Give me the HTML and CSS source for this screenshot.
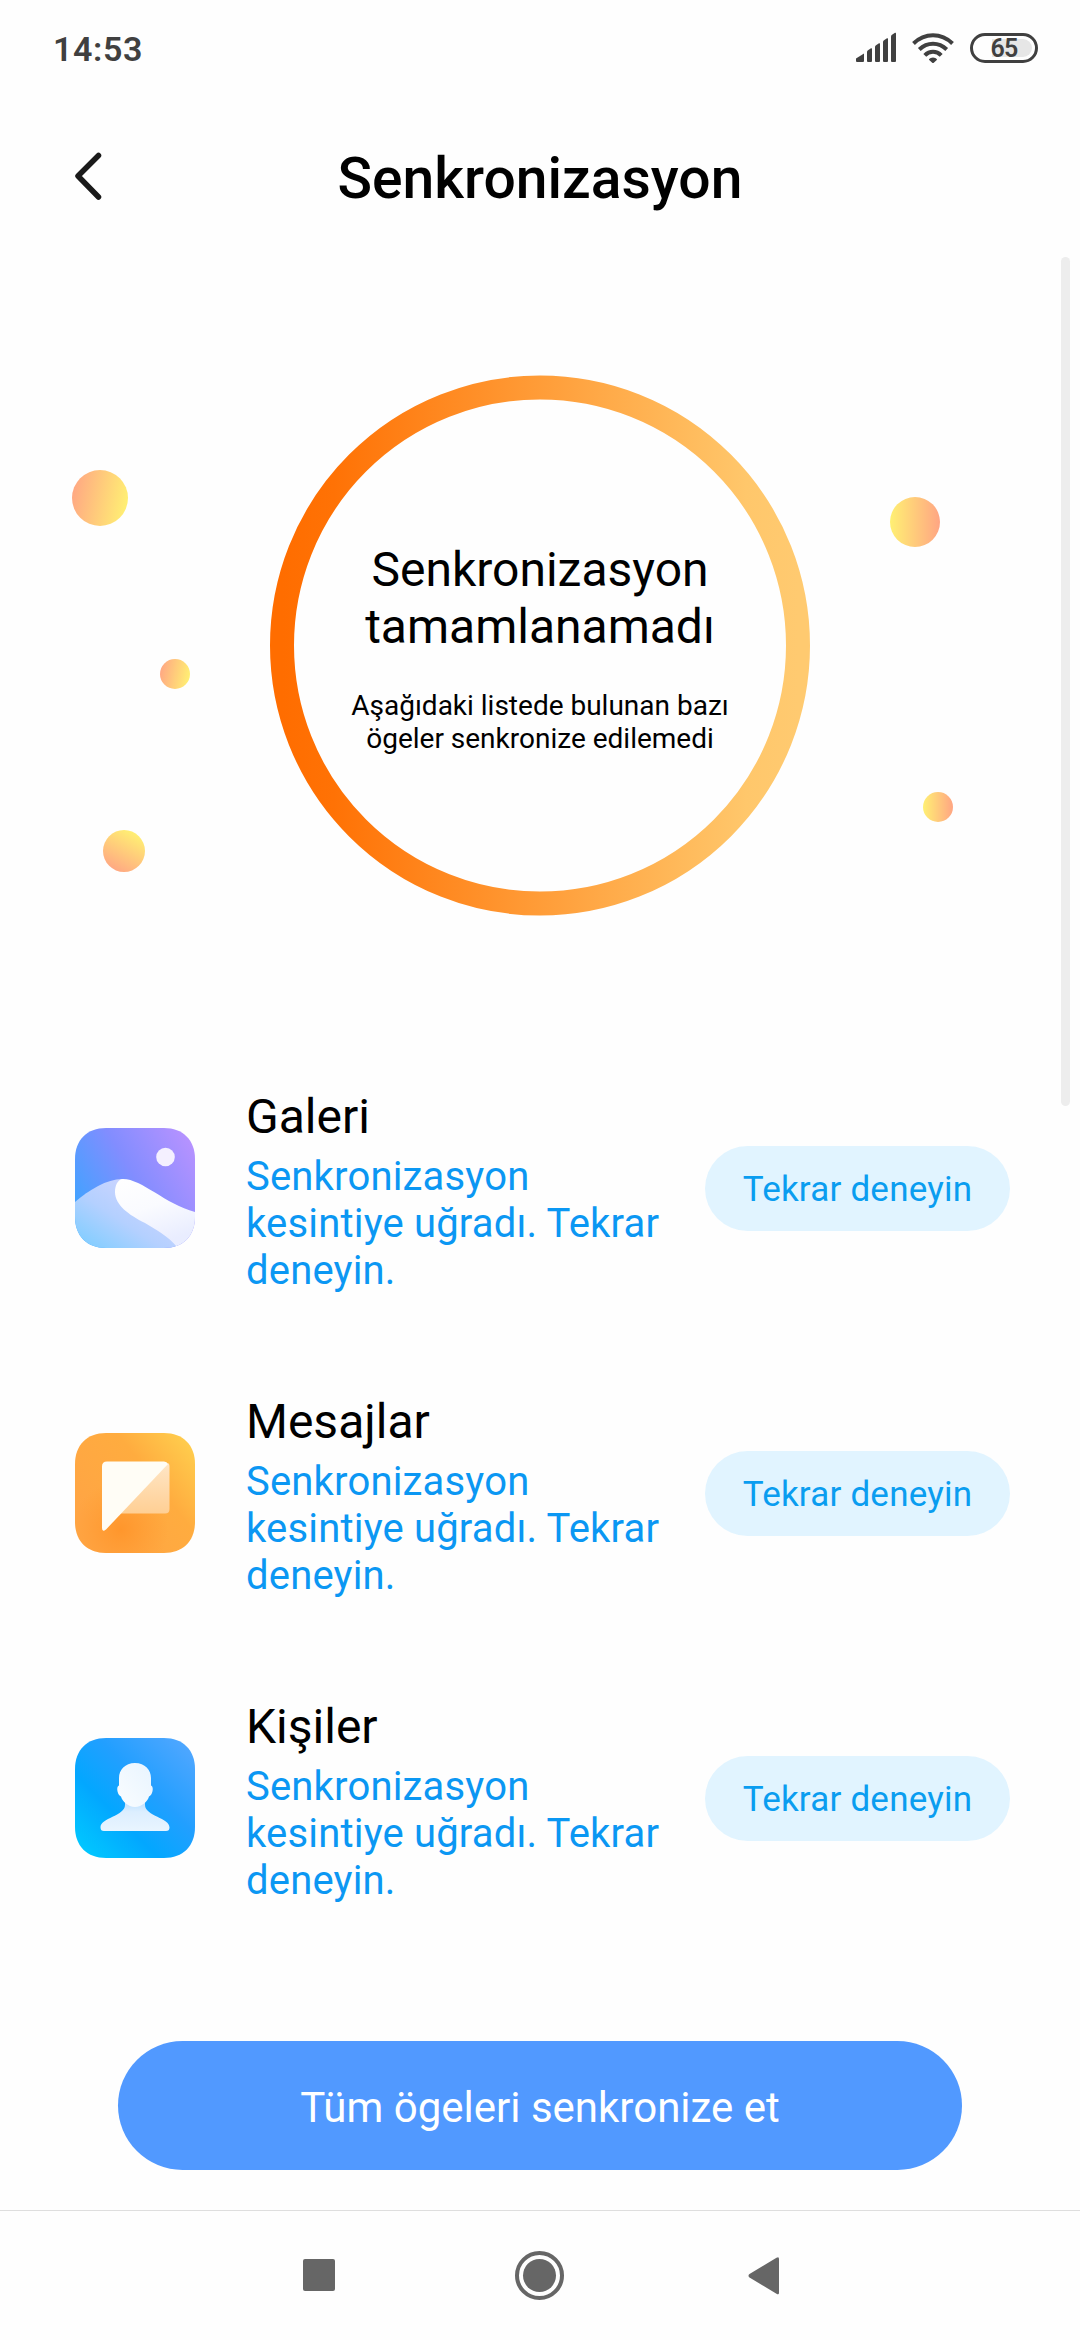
FILE: index.html
```html
<!DOCTYPE html>
<html lang="tr">
<head>
<meta charset="utf-8">
<title>Senkronizasyon</title>
<link rel="stylesheet" href="styles.css">
</head>
<body>
<div class="screen">
  <div class="status">
    <span class="time">14:53</span>
    <svg class="status-icons" width="184" height="32" viewBox="0 0 184 32">
      <g fill="#404040">
        <path d="M2 26.5 10 21.5V29a1 1 0 0 1-1 1H3a1 1 0 0 1-1-1z"/>
        <path d="M13 20q0-1 1-1.700l3-2q1-.5 1 .7V29a1 1 0 0 1-1 1h-3a1 1 0 0 1-1-1z"/>
        <path d="M21 15q0-1 1-1.700l3-2q1-.5 1 .7V29a1 1 0 0 1-1 1h-3a1 1 0 0 1-1-1z"/>
        <path d="M29 10q0-1 1-1.700l3-2q1-.5 1 .7V29a1 1 0 0 1-1 1h-3a1 1 0 0 1-1-1z"/>
        <path d="M37 4.500q0-1 1-1.700l3-2q1-.5 1 .7V29a1 1 0 0 1-1 1h-3a1 1 0 0 1-1-1z"/>
        <path d="M79 25.500q-2.700 0-3.800 1.500-.4.500 0 1l3 2.800q.8.600 1.600 0l3-2.800q.4-.5 0-1-1.100-1.500-3.800-1.500z"/>
      </g>
      <g fill="none" stroke="#404040" stroke-width="4">
        <path d="M59.500 11.500Q68 3.300 79 3.300T98.500 11.500"/>
        <path d="M65.300 17.500Q71.300 11.700 79 11.700T92.700 17.500"/>
        <path d="M70.800 23.300Q74.300 19.700 79 19.700T87.200 23.300"/>
      </g>
      <path d="M138 7h31a9 9 0 0 1 0 18h-31z" fill="#e6e6e6"/>
      <rect x="117.500" y="2.500" width="65" height="27" rx="13.500" fill="none" stroke="#404040" stroke-width="3"/>
      <text class="battery" x="150" y="25" text-anchor="middle">65</text>
    </svg>
  </div>

  <header class="bar">
    <svg class="back" width="30" height="50" viewBox="0 0 30 50"><path d="M24.500 4.500 4 25 24.500 46" fill="none" stroke="#1a1a1a" stroke-width="5.500" stroke-linecap="round" stroke-linejoin="round"/></svg>
    <h1 class="title">Senkronizasyon</h1>
  </header>

  <main class="content">
    <section class="hero">
      <svg class="art" width="1080" height="796" viewBox="0 240 1080 796">
        <defs>
          <linearGradient id="ring" x1="0" x2="1" y1="0" y2="0"><stop offset="0" stop-color="#ff6d00"/><stop offset=".1" stop-color="#ff7205"/><stop offset=".9" stop-color="#ffc76b"/><stop offset="1" stop-color="#ffca70"/></linearGradient>
          <linearGradient id="dotL" x1="0" x2="1" y1=".4" y2=".6"><stop offset="0" stop-color="#ffa883"/><stop offset="1" stop-color="#fff073"/></linearGradient>
          <linearGradient id="dotR" x1="0" x2="1" y1="0" y2="0"><stop offset="0" stop-color="#fff073"/><stop offset="1" stop-color="#ffa583"/></linearGradient>
          <linearGradient id="dotB" x1=".25" x2=".75" y1=".95" y2=".05"><stop offset="0" stop-color="#ffa883"/><stop offset="1" stop-color="#fff073"/></linearGradient>
        </defs>
        <circle cx="540" cy="645.500" r="258" fill="none" stroke="url(#ring)" stroke-width="24"/>
        <circle cx="100" cy="498" r="28" fill="url(#dotL)"/>
        <circle cx="175" cy="674" r="15" fill="url(#dotL)"/>
        <circle cx="124" cy="851" r="21" fill="url(#dotB)"/>
        <circle cx="915" cy="522" r="25" fill="url(#dotR)"/>
        <circle cx="938" cy="807" r="15" fill="url(#dotR)"/>
      </svg>
      <div class="state">
        <h2 class="state-title">Senkronizasyon tamamlanamadı</h2>
        <p class="state-text">Aşağıdaki listede bulunan bazı ögeler senkronize edilemedi</p>
      </div>
    </section>

    <ul class="list">
      <li class="row">
        <svg class="app" width="120" height="120" viewBox="0 0 120 120">
          <defs>
            <linearGradient id="sky" x1="0" y1=".65" x2=".95" y2=".1"><stop offset="0" stop-color="#3fa3ff"/><stop offset=".5" stop-color="#828dff"/><stop offset="1" stop-color="#b592ff"/></linearGradient>
            <linearGradient id="hill" x1="0" y1="1" x2=".7" y2=".3"><stop offset="0" stop-color="#78cdff"/><stop offset=".6" stop-color="#b4d0ff"/><stop offset="1" stop-color="#c8d4ff"/></linearGradient>
            <linearGradient id="dune" x1="0" y1="0" x2=".4" y2="1"><stop offset="0" stop-color="#fff"/><stop offset=".5" stop-color="#fafbff"/><stop offset="1" stop-color="#e9edff"/></linearGradient>
            <clipPath id="tile"><path d="M31 0H89C108 0 120 12 120 31V89C120 108 108 120 89 120H31C12 120 0 108 0 89V31C0 12 12 0 31 0Z"/></clipPath>
          </defs>
          <g clip-path="url(#tile)">
            <rect width="120" height="120" fill="url(#sky)"/>
            <path d="M0 74C14 62 32 51 47 51L80 80 104 120H0Z" fill="url(#hill)"/>
            <path d="M47 51C66 50 90 76 120 84V120H103C92 107 81 102 70 95C54 87 40 77 40 64C40 57 43 52 47 51Z" fill="url(#dune)"/>
            <circle cx="90.500" cy="29" r="9.300" fill="#f4f0ff"/>
          </g>
        </svg>
        <div class="info"><h3 class="name">Galeri</h3><p class="note">Senkronizasyon kesintiye uğradı. Tekrar deneyin.</p></div>
        <button class="retry">Tekrar deneyin</button>
      </li>
      <li class="row">
        <svg class="app" width="120" height="120" viewBox="0 0 120 120">
          <defs>
            <linearGradient id="amber" x1=".1" y1=".7" x2="1" y2="0"><stop offset="0" stop-color="#ffa544"/><stop offset=".55" stop-color="#ffac3f"/><stop offset="1" stop-color="#ffd350"/></linearGradient>
            <radialGradient id="glow" cx=".38" cy=".8" r=".4"><stop offset="0" stop-color="#ff962c"/><stop offset="1" stop-color="#ff9a30" stop-opacity="0"/></radialGradient>
            <linearGradient id="fold" x1="0" y1="1" x2="0" y2="0"><stop offset="0" stop-color="#ffcf94"/><stop offset="1" stop-color="#ffe6c6"/></linearGradient>
          </defs>
          <g clip-path="url(#tile)">
            <rect width="120" height="120" fill="url(#amber)"/>
            <rect width="120" height="120" fill="url(#glow)"/>
            <path d="M93 30 45 80.500H90Q94.500 80.500 94.500 76V33Q94.500 31 93 30Z" fill="url(#fold)"/>
            <path d="M32 28.500H89Q92 28.500 93 31L31 96.500Q27 99.500 27 95V33.500Q27 28.500 32 28.500Z" fill="#fffdf6"/>
          </g>
        </svg>
        <div class="info"><h3 class="name">Mesajlar</h3><p class="note">Senkronizasyon kesintiye uğradı. Tekrar deneyin.</p></div>
        <button class="retry">Tekrar deneyin</button>
      </li>
      <li class="row">
        <svg class="app" width="120" height="120" viewBox="0 0 120 120">
          <defs>
            <linearGradient id="azure" x1="0" y1="1" x2="1" y2="0"><stop offset="0" stop-color="#00ceff"/><stop offset=".35" stop-color="#03a7ff"/><stop offset=".6" stop-color="#229fff"/><stop offset="1" stop-color="#57a8ff"/></linearGradient>
            <linearGradient id="bust" x1="0" y1="0" x2="0" y2="1"><stop offset="0" stop-color="#a9d8ff"/><stop offset=".45" stop-color="#dceeff"/><stop offset="1" stop-color="#e9f5ff"/></linearGradient>
            <linearGradient id="head" x1="1" y1="0" x2="0" y2="1"><stop offset="0" stop-color="#e8f4ff"/><stop offset="1" stop-color="#fafdff"/></linearGradient>
          </defs>
          <g clip-path="url(#tile)">
            <rect width="120" height="120" fill="url(#azure)"/>
            <path d="M50 58V67C50 78 25 80 25.500 89.500Q25.500 93 29 93H91Q94.500 93 94.500 89.500C95 80 70 78 70 67V58Z" fill="url(#bust)"/>
            <path d="M60 25C70 25 76 32 76 40V47.500C79 48 78 57 74 58.500C73 63 67 69 60 69S47 63 46 58.500C42 57 41 48 44 47.500V40C44 32 50 25 60 25Z" fill="url(#head)"/>
          </g>
        </svg>
        <div class="info"><h3 class="name">Kişiler</h3><p class="note">Senkronizasyon kesintiye uğradı. Tekrar deneyin.</p></div>
        <button class="retry">Tekrar deneyin</button>
      </li>
    </ul>
    <div class="scrollbar"></div>
  </main>

  <div class="action"><button class="sync-all">Tüm ögeleri senkronize et</button></div>

  <nav class="nav">
    <svg width="1080" height="129" viewBox="0 2211 1080 129" fill="#666">
      <rect x="303" y="2259" width="32" height="32" rx="2"/>
      <circle cx="539.500" cy="2275.500" r="16.500"/>
      <circle cx="539.500" cy="2275.500" r="22.500" fill="none" stroke="#666" stroke-width="4"/>
      <path d="M776.500 2257.800Q779 2256 779 2259V2292.500Q779 2295.500 776.500 2293.700L749.500 2277.500Q747.500 2275.700 749.500 2274Z"/>
    </svg>
  </nav>
</div>
</body>
</html>
```

FILE: styles.css
```css
* { box-sizing: border-box; }
body { margin: 0; background: #fefefe; font-family: Roboto, "Noto Sans", sans-serif; color: #000; }
h1, h2, h3, p, ul { margin: 0; padding: 0; font-weight: 400; list-style: none; }
button { border: 0; padding: 0; font: inherit; }
svg { display: block; flex: none; }

.screen { width: 1080px; height: 2340px; display: flex; flex-direction: column; overflow: hidden; }

.status { height: 96px; padding: 0 42px 0 53px; display: flex; align-items: center; justify-content: space-between; }
.time { font-size: 34px; font-weight: 600; line-height: 40px; color: #404040; margin-top: 2px; letter-spacing: 0.6px; }
.battery { font-size: 25px; font-weight: 600; letter-spacing: -0.8px; fill: #404040; }

.bar { height: 144px; padding: 0 74px; display: grid; grid-template-columns: 30px 1fr 30px; align-items: center; }
.back { margin-top: 15px; }
.title { font-size: 57px; font-weight: 500; line-height: 68px; text-align: center; margin-top: 22px; }

.content { position: relative; height: 1711px; }
.hero { height: 796px; display: grid; justify-items: center; }
.hero > * { grid-area: 1 / 1; }
.state { width: 400px; padding-top: 301px; text-align: center; }
.state-title { font-size: 48px; line-height: 57px; }
.state-text { margin-top: 34px; font-size: 28px; line-height: 33px; }

.row { height: 305px; padding: 0 70px 0 75px; display: flex; align-items: center; }
.app { margin-bottom: 1px; }
.info { width: 430px; margin: 5px 29px 0 51px; }
.name { font-size: 48px; line-height: 56px; padding-top: 1px; }
.note { margin-top: 8px; font-size: 40px; line-height: 47px; letter-spacing: 0.18px; color: #0b97f3; }
.retry { width: 305px; height: 85px; border-radius: 43px; background: #e1f4ff; color: #0a9df0; font-size: 35px; letter-spacing: 0.2px; padding-top: 2px; }

.scrollbar { position: absolute; top: 17px; right: 10px; width: 9px; height: 849px; border-radius: 5px; background: #ededed; }

.action { height: 259px; padding: 90px 118px 0; }
.sync-all { width: 844px; height: 129px; border-radius: 65px; background: #5199ff; color: #fff; font-size: 42px; padding-top: 3px; }

.nav { height: 130px; border-top: 1px solid #dedede; }
```
